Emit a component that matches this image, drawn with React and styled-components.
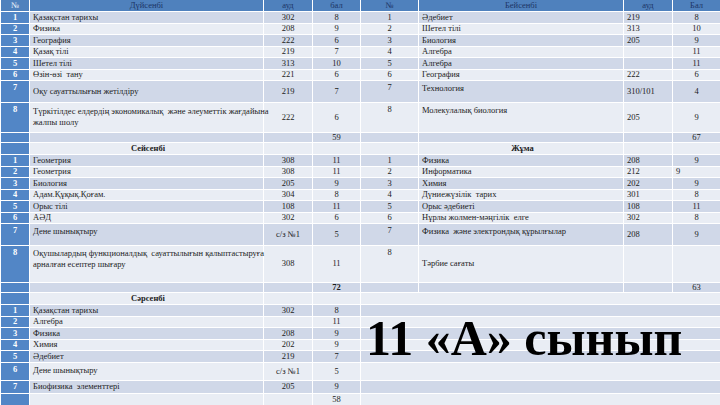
import styled, { createGlobalStyle } from "styled-components"

const GlobalStyle = createGlobalStyle`
  html, body {
    margin: 0;
    padding: 0;
    background: #e9edf4;
    overflow: hidden;
  }
`

const L = (n, s, a, b, o = {}) => ({ n, s, a, b, ...o })
const E = (b = "", o = {}) => L("", "", "", b, o)

const rows = [
  { h: 12, l: L(1, "Қазақстан тарихы", "302", "8"), r: L(1, "Әдебиет", "219", "8") },
  { h: 11, l: L(2, "Физика", "208", "9"), r: L(2, "Шетел тілі", "313", "10") },
  { h: 12, l: L(3, "География", "222", "6"), r: L(3, "Биология", "205", "9") },
  { h: 11, l: L(4, "Қазақ тілі", "219", "7"), r: L(4, "Алгебра", "", "11") },
  { h: 12, l: L(5, "Шетел тілі", "313", "10"), r: L(5, "Алгебра", "", "11") },
  { h: 11, l: L(6, "Өзін-өзі  тану", "221", "6"), r: L(6, "География", "222", "6") },
  { h: 22, l: L(7, "Оқу сауаттылығын жетілдіру", "219", "7"), r: L(7, "Технология", "310/101", "4", { top: true }) },
  {
    h: 30,
    l: L(8, "Түркітілдес елдердің экономикалық  және әлеуметтік жағдайына\nжалпы шолу", "222", "6", { two: true }),
    r: L(8, "Молекулалық биология", "205", "9", { top: true }),
  },
  { h: 10, l: E("59"), r: E("67") },
  { h: 12, l: L("", "Сейсенбі", "", "", { day: true }), r: L("", "Жұма", "", "", { day: true }) },
  { h: 12, l: L(1, "Геометрия", "308", "11"), r: L(1, "Физика", "208", "9") },
  { h: 11, l: L(2, "Геометрия", "308", "11"), r: L(2, "Информатика", "212", "9", { bLeft: true }) },
  { h: 12, l: L(3, "Биология", "205", "9"), r: L(3, "Химия", "202", "9") },
  { h: 11, l: L(4, "Адам.Құқық.Қоғам.", "304", "8"), r: L(4, "Дүниежүзілік  тарих", "301", "8") },
  { h: 12, l: L(5, "Орыс тілі", "108", "11"), r: L(5, "Орыс әдебиеті", "108", "11") },
  { h: 11, l: L(6, "АӘД", "302", "6"), r: L(6, "Нұрлы жолмен-мәңгілік  елге", "302", "8") },
  {
    h: 22,
    l: L(7, "Дене шынықтыру", "с/з №1", "5", { top: true }),
    r: L(7, "Физика  және электрондық құрылғылар", "208", "9", { top: true }),
  },
  {
    h: 37,
    l: L(8, "Оқушылардың функционалдық  сауаттылығын қалыптастыруға\nарналған есептер шығару", "308", "11", { top: true, two: true }),
    r: L(8, "Тәрбие сағаты", "", ""),
  },
  { h: 10, l: E("72", { boldB: true }), r: E("63") },
  { h: 12, l: L("", "Сәрсенбі", "", "", { day: true }), r: null },
  { h: 12, l: L(1, "Қазақстан тарихы", "302", "8"), r: null },
  { h: 11, l: L(2, "Алгебра", "", "11"), r: null },
  { h: 12, l: L(3, "Физика", "208", "9"), r: null },
  { h: 11, l: L(4, "Химия", "202", "9"), r: null },
  { h: 12, l: L(5, "Әдебиет", "219", "7"), r: null },
  { h: 18, l: L(6, "Дене шынықтыру", "с/з №1", "5", { top: true }), r: null },
  { h: 13, l: L(7, "Биофизика  элементтері", "205", "9"), r: null },
  { h: 12, l: E("58"), r: null },
]

export default function App() {
  return (
    <Page>
      <GlobalStyle />
      <Table>
        <colgroup>
          {[29, 234, 49, 48, 58, 205, 49, 48].map((w, i) => (
            <col key={i} style={{ width: w }} />
          ))}
        </colgroup>
        <tbody>
          <HeadRow>
            <HeadCell $light>№</HeadCell>
            <HeadCell>Дүйсенбі</HeadCell>
            <HeadCell>ауд</HeadCell>
            <HeadCell>бал</HeadCell>
            <HeadCell>№</HeadCell>
            <HeadCell>Бейсенбі</HeadCell>
            <HeadCell>ауд</HeadCell>
            <HeadCell>Бал</HeadCell>
          </HeadRow>
          {rows.map((row, i) => (
            <Row key={i} $h={row.h} $band={i % 2 === 0}>
              <NumCell $blue $top={row.h > 14}>{row.l.n}</NumCell>
              <Subject
                $top={row.l.top}
                $two={row.l.two}
                $align={row.l.day ? "center" : "left"}
                $bold={row.l.day}
              >
                {row.l.s}
              </Subject>
              <Cell $align="center">{row.l.a}</Cell>
              <Cell $align="center" $bold={row.l.boldB}>{row.l.b}</Cell>
              {row.r ? (
                <>
                  <NumCell $top={row.h > 14}>{row.r.n}</NumCell>
                  <Subject $top={row.r.top} $align={row.r.day ? "center" : "left"} $bold={row.r.day}>
                    {row.r.s}
                  </Subject>
                  <Cell $align="left">{row.r.a}</Cell>
                  <Cell $align={row.r.bLeft ? "left" : "center"}>{row.r.b}</Cell>
                </>
              ) : (
                <Blank colSpan={4} />
              )}
            </Row>
          ))}
        </tbody>
      </Table>
      <Title>11 «А» сынып</Title>
    </Page>
  )
}

const Page = styled.div`
  position: relative;
  width: 720px;
  height: 405px;
  overflow: hidden;
  font-family: "Liberation Serif", "Times New Roman", serif;
  color: #1c1c1c;
`

const Table = styled.table`
  width: 720px;
  table-layout: fixed;
  border-collapse: collapse;
  font-size: 8.5px;
  line-height: 9px;
`

const HeadRow = styled.tr`
  height: 11px;
  background: #4f81bd;
`

const HeadCell = styled.td`
  padding: 0 3px;
  height: 10px;
  text-align: center;
  vertical-align: middle;
  color: ${(p) => (p.$light ? "#eef3fb" : "#1d3566")};
  border: 1px solid #ffffff;
  border-top: none;
`

const Row = styled.tr`
  height: ${(p) => p.$h}px;
  background: ${(p) => (p.$band ? "#d0d8e8" : "#e9edf4")};

  td {
    height: ${(p) => p.$h - 1}px;
    box-sizing: border-box;
  }
`

const Cell = styled.td`
  padding: 0 3px;
  vertical-align: middle;
  text-align: ${(p) => p.$align};
  font-weight: ${(p) => (p.$bold ? 700 : 400)};
  border: 1px solid #ffffff;
  overflow: hidden;
`

const Subject = styled.td`
  padding: ${(p) => (p.$top ? "2px 0 0 3px" : "0 0 0 3px")};
  vertical-align: ${(p) => (p.$top ? "top" : "middle")};
  text-align: ${(p) => p.$align};
  font-weight: ${(p) => (p.$bold ? 700 : 400)};
  line-height: ${(p) => (p.$top || p.$two ? "11px" : "9px")};
  white-space: pre;
  border: 1px solid #ffffff;
  overflow: visible;
`

const NumCell = styled.td`
  padding: ${(p) => (p.$top ? "2px 2px 0" : "0 2px")};
  vertical-align: ${(p) => (p.$top ? "top" : "middle")};
  text-align: center;
  border: 1px solid #ffffff;
  background: ${(p) => (p.$blue ? "#5286c6" : "transparent")};
  color: ${(p) => (p.$blue ? "#ffffff" : "#1c1c1c")};
  font-weight: ${(p) => (p.$blue ? 700 : 400)};
`

const Blank = styled.td`
  padding: 0;
  border-left: 1px solid #ffffff;
  border-top: 1px solid #ffffff;
`

const Title = styled.div`
  position: absolute;
  left: 366px;
  top: 308px;
  font-family: "Liberation Serif", "Times New Roman", serif;
  font-weight: 700;
  font-size: 50px;
  line-height: 60px;
  color: #000000;
  white-space: nowrap;
`
